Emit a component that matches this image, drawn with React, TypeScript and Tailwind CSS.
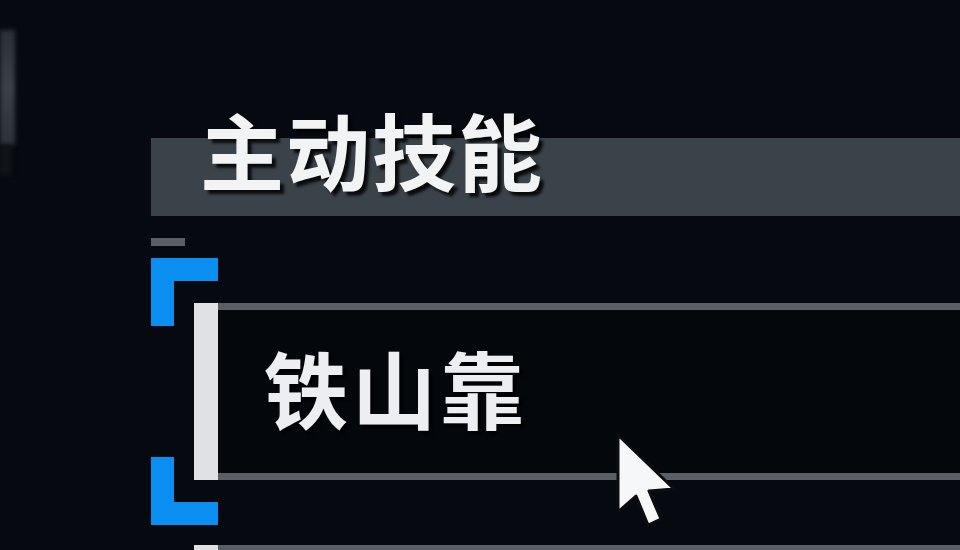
import React from "react";

const skills = ["铁山靠"];

const Bracket = ({ flip }: { flip?: boolean }) => (
  <div
    className={`absolute left-0 w-[67px] h-[68px] ${
      flip ? "bottom-0 border-b-[23px]" : "top-0 border-t-[23px]"
    } border-l-[23px] border-[#0a8ef0]`}
  />
);

const SkillRow = ({ name, active }: { name: string; active?: boolean }) => (
  <div className="flex h-[177px]">
    <div className="w-[24px] shrink-0 bg-[#dfe1e5]" />
    <div
      className={`flex flex-1 items-center border-y-[7px] border-[#5a5f66] pl-[46px] pb-[10px] ${
        active ? "bg-[#04070c]" : "bg-[#070b11]"
      }`}
    >
      <span className="text-[84px] leading-none font-semibold tracking-[4px] text-[#eceef1] [text-shadow:3px_3px_3px_rgba(0,0,0,0.9)]">
        {name}
      </span>
    </div>
  </div>
);

const Cursor = () => (
  <svg
    className="absolute left-[611px] top-[430px]"
    width="70"
    height="100"
    viewBox="0 0 70 100"
  >
    <path
      d="M7 5 L7 82 L25 66 L37 95 L50 89 L38 61 L63 59 Z"
      fill="#f6f7f9"
      stroke="#0b0d10"
      strokeWidth="3"
      strokeLinejoin="round"
    />
  </svg>
);

export default function App() {
  return (
    <div
      className="relative w-[960px] h-[550px] overflow-hidden bg-[#060a10] flex"
      style={{ fontFamily: '"Noto Sans CJK SC", "Noto Sans", sans-serif' }}
    >
      {/* edge of the neighbouring panel */}
      <div className="w-[151px] shrink-0 pt-[30px]">
        <div className="w-[15px] h-[115px] bg-gradient-to-b from-[#2a3036] via-[#3a4047] to-[#2c3238] blur-[2px]" />
        <div className="w-[12px] h-[30px] bg-[#101418] blur-[2px]" />
      </div>

      <div className="flex-1 flex flex-col pt-[138px]">
        {/* section header */}
        <div className="shrink-0 h-[78px] bg-[#3b434a] pl-[49px]">
          <h2 className="-mt-[31px] text-[84px] leading-none font-semibold tracking-[2px] text-[#f2f3f5] [text-shadow:4px_4px_3px_rgba(0,0,0,0.85)]">
            主动技能
          </h2>
        </div>

        <div className="shrink-0 mt-[22px] w-[34px] h-[8px] bg-[#5a5e64]" />

        {/* selected skill with focus brackets */}
        <div className="shrink-0 relative mt-[12px] h-[267px] pt-[45px] pl-[43px]">
          <Bracket />
          <Bracket flip />
          {skills.map((s) => (
            <SkillRow key={s} name={s} active />
          ))}
        </div>

        {/* next row, cut off by the viewport */}
        <div className="shrink-0 mt-[20px] ml-[43px] flex h-[30px]">
          <div className="w-[24px] bg-[#dfe1e5]" />
          <div className="flex-1 border-t-[6px] border-[#5a5f66]" />
        </div>
      </div>

      <Cursor />
    </div>
  );
}
